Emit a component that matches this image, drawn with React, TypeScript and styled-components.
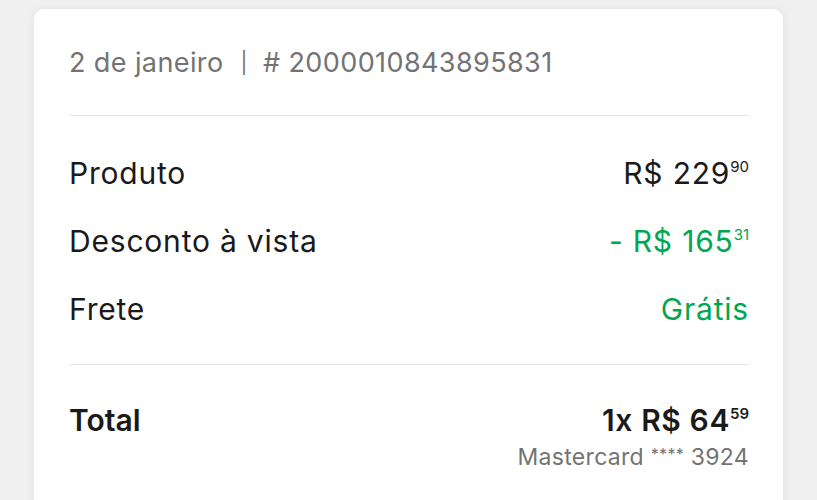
import React from 'react'
import styled, { createGlobalStyle } from 'styled-components';

const GlobalStyle = createGlobalStyle`
  html, body {
    margin: 0;
    padding: 0;
    background-color: #f0f0f0;
    font-family: Inter, "Open Sans", sans-serif;
    -webkit-font-smoothing: antialiased;
  }
`;

const Page = styled.div`
  padding: 9px 34px 0 34px;
  height: 491px;
  overflow: hidden;
`;

const Card = styled.div`
  background-color: #fff;
  border-radius: 10px;
  box-shadow: 0 1px 10px rgba(0, 0, 0, 0.07);
  padding: 38px 34px 40px 35px;
  min-height: 520px;
`;

const Header = styled.div`
  font-size: 27px;
  line-height: 32px;
  letter-spacing: 0.4px;
  color: #737373;
  padding-bottom: 36px;
  border-bottom: 1px solid #e3e3e3;
  .sep {
    margin: 0 15px 0 17px;
    font-size: 21px;
    vertical-align: 2px;
  }
`;

const Section = styled.div`
  display: flex;
  flex-direction: column;
  gap: 34px;
  padding: 40px 0 38px;
  border-bottom: 1px solid #e3e3e3;
`;

const Row = styled.div`
  display: flex;
  justify-content: space-between;
  align-items: center;
  font-size: 30px;
  line-height: 34px;
  letter-spacing: 0.8px;
  color: #1a1a1a;
`;

const Value = styled.span<{ $green?: boolean; $bold?: boolean }>`
  color: ${(props) => (props.$green ? '#00a650' : '#1a1a1a')};
  font-weight: ${(props) => (props.$bold ? 600 : 400)};
  letter-spacing: ${(props) => (props.$bold ? '0.6px' : 'inherit')};
  white-space: nowrap;
`;

const Cents = styled.sup`
  font-size: 15px;
  vertical-align: 12px;
  line-height: 0;
  letter-spacing: 0;
`;

const TotalBlock = styled.div`
  padding-top: 38px;
`;

const TotalRow = styled(Row)`
  font-weight: 600;
  letter-spacing: 0;
`;

const Payment = styled.div`
  text-align: right;
  font-size: 23px;
  line-height: 28px;
  letter-spacing: 0.3px;
  color: #737373;
  margin-top: 3px;
  .stars {
    font-size: 16px;
    vertical-align: 5px;
  }
`;

function Price({ whole, cents, prefix = '' }: { whole: string; cents: string; prefix?: string }) {
  return (
    <>
      {prefix}R$ {whole}
      <Cents>{cents}</Cents>
    </>
  );
}

function App() {
  return (
    <>
      <GlobalStyle />
      <Page>
        <Card>
          <Header>
            2 de janeiro<span className="sep">|</span># 2000010843895831
          </Header>
          <Section>
            <Row>
              <span>Produto</span>
              <Value><Price whole="229" cents="90" /></Value>
            </Row>
            <Row>
              <span>Desconto à vista</span>
              <Value $green><Price prefix="- " whole="165" cents="31" /></Value>
            </Row>
            <Row>
              <span>Frete</span>
              <Value $green>Grátis</Value>
            </Row>
          </Section>
          <TotalBlock>
            <TotalRow>
              <span>Total</span>
              <Value $bold>1x <Price whole="64" cents="59" /></Value>
            </TotalRow>
            <Payment>
              Mastercard <span className="stars">****</span> 3924
            </Payment>
          </TotalBlock>
        </Card>
      </Page>
    </>
  )
}

export default App
